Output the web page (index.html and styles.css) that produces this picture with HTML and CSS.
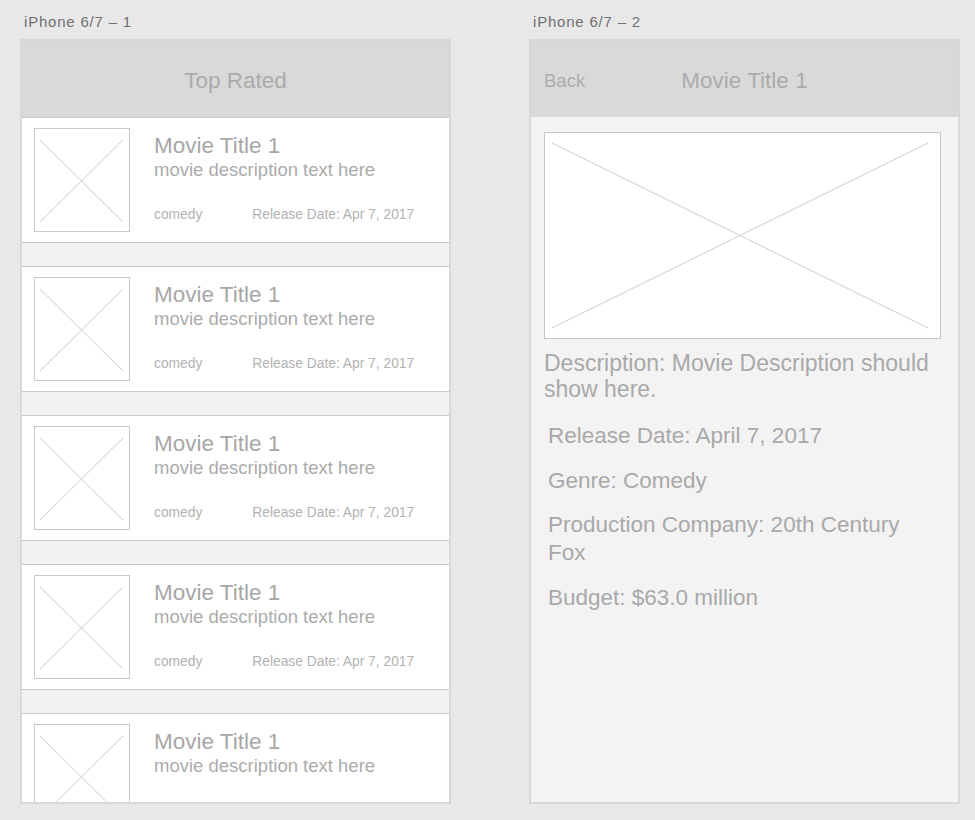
FILE: index.html
```html
<!DOCTYPE html>
<html lang="en">
<head>
<meta charset="utf-8">
<title>Wireframes</title>
<link rel="stylesheet" href="styles.css">
</head>
<body>
<div class="canvas">
  <section class="artboard">
    <div class="label">iPhone 6/7 – 1</div>
    <div class="phone">
      <header class="bar"><span class="bar-title">Top Rated</span></header>
      <div class="list">
        <article class="card">
          <div class="thumb"><svg width="94" height="102" viewBox="0 0 94 102"><line x1="5" y1="11" x2="88" y2="93"/><line x1="88" y1="11" x2="5" y2="93"/></svg></div>
          <div class="info">
            <div class="title">Movie Title 1</div>
            <div class="desc">movie description text here</div>
            <div class="meta"><span>comedy</span><span>Release Date: Apr 7, 2017</span></div>
          </div>
        </article>
        <article class="card">
          <div class="thumb"><svg width="94" height="102" viewBox="0 0 94 102"><line x1="5" y1="11" x2="88" y2="93"/><line x1="88" y1="11" x2="5" y2="93"/></svg></div>
          <div class="info">
            <div class="title">Movie Title 1</div>
            <div class="desc">movie description text here</div>
            <div class="meta"><span>comedy</span><span>Release Date: Apr 7, 2017</span></div>
          </div>
        </article>
        <article class="card">
          <div class="thumb"><svg width="94" height="102" viewBox="0 0 94 102"><line x1="5" y1="11" x2="88" y2="93"/><line x1="88" y1="11" x2="5" y2="93"/></svg></div>
          <div class="info">
            <div class="title">Movie Title 1</div>
            <div class="desc">movie description text here</div>
            <div class="meta"><span>comedy</span><span>Release Date: Apr 7, 2017</span></div>
          </div>
        </article>
        <article class="card">
          <div class="thumb"><svg width="94" height="102" viewBox="0 0 94 102"><line x1="5" y1="11" x2="88" y2="93"/><line x1="88" y1="11" x2="5" y2="93"/></svg></div>
          <div class="info">
            <div class="title">Movie Title 1</div>
            <div class="desc">movie description text here</div>
            <div class="meta"><span>comedy</span><span>Release Date: Apr 7, 2017</span></div>
          </div>
        </article>
        <article class="card">
          <div class="thumb"><svg width="94" height="102" viewBox="0 0 94 102"><line x1="5" y1="11" x2="88" y2="93"/><line x1="88" y1="11" x2="5" y2="93"/></svg></div>
          <div class="info">
            <div class="title">Movie Title 1</div>
            <div class="desc">movie description text here</div>
          </div>
        </article>
      </div>
    </div>
  </section>

  <section class="artboard">
    <div class="label">iPhone 6/7 – 2</div>
    <div class="phone phone-detail">
      <header class="bar bar-nav">
        <span class="back">Back</span>
        <span class="bar-title">Movie Title 1</span>
        <span></span>
      </header>
      <div class="detail">
        <div class="poster"><svg width="395" height="205" viewBox="0 0 395 205"><line x1="7" y1="10" x2="383" y2="195"/><line x1="383" y1="10" x2="7" y2="195"/></svg></div>
        <p class="detail-desc">Description: Movie Description should show here.</p>
        <div class="facts">
          <p>Release Date: April 7, 2017</p>
          <p>Genre: Comedy</p>
          <p>Production Company: 20th Century Fox</p>
          <p>Budget: $63.0 million</p>
        </div>
      </div>
    </div>
  </section>
</div>
</body>
</html>
```

FILE: styles.css
```css
* { box-sizing: border-box; }

html, body {
  margin: 0;
  padding: 0;
  background: #e8e8e8;
  font-family: "Liberation Sans", Arial, Helvetica, sans-serif;
}

.canvas {
  display: flex;
  gap: 78px;
  padding-left: 20px;
  height: 820px;
  overflow: hidden;
}

.artboard {
  width: 431px;
  display: flex;
  flex-direction: column;
}

.label {
  height: 39px;
  padding: 13px 0 0 4px;
  font-size: 15px;
  line-height: 18px;
  letter-spacing: 0.8px;
  color: #707070;
}

.phone {
  width: 431px;
  height: 765px;
  border: 2px solid #d8d8d8;
  background: #f2f2f2;
  overflow: hidden;
}

.phone-detail {
  background: #f3f3f3;
}

.bar {
  height: 76px;
  background: #d9d9d9;
  display: flex;
  align-items: center;
  justify-content: center;
  padding-top: 3px;
}

.bar-title {
  font-size: 22.5px;
  line-height: 26px;
  color: #ababab;
}

.bar-nav {
  display: grid;
  grid-template-columns: 1fr auto 1fr;
  align-items: center;
}

.back {
  padding-left: 13px;
  font-size: 18.5px;
  line-height: 22px;
  color: #adadad;
}

.list {
  display: flex;
  flex-direction: column;
  gap: 23px;
}

.card {
  flex: none;
  height: 126px;
  background: #ffffff;
  border-top: 1px solid #c9c9c9;
  border-bottom: 1px solid #c9c9c9;
  display: flex;
  padding: 10px 0 10px 12px;
}

.thumb {
  flex: none;
  width: 96px;
  height: 104px;
  border: 1px solid #c9c9c9;
  background: #fff;
}

.thumb svg, .poster svg {
  display: block;
}

.thumb line, .poster line {
  stroke: #cbcbcb;
  stroke-width: 1;
}

.info {
  margin-left: 24px;
  padding-top: 5px;
}

.title {
  font-size: 22.5px;
  line-height: 26px;
  color: #a7a7a7;
}

.desc {
  font-size: 18.5px;
  line-height: 22px;
  color: #ababab;
}

.meta {
  margin-top: 25px;
  display: flex;
  gap: 50px;
  font-size: 13.8px;
  line-height: 17px;
  color: #b2b2b2;
}

.detail {
  padding: 15px 0 0 13px;
}

.poster {
  width: 397px;
  height: 207px;
  border: 1px solid #c6c6c6;
  background: #ffffff;
}

.detail-desc {
  margin: 11px 0 0 0;
  width: 400px;
  font-size: 23px;
  line-height: 26px;
  color: #a9a9a9;
}

.facts {
  padding: 0 24px 0 4px;
  margin-top: 20px;
  display: flex;
  flex-direction: column;
  gap: 16.5px;
}

.facts p {
  margin: 0;
  font-size: 22.5px;
  line-height: 28px;
  color: #a9a9a9;
}
```
